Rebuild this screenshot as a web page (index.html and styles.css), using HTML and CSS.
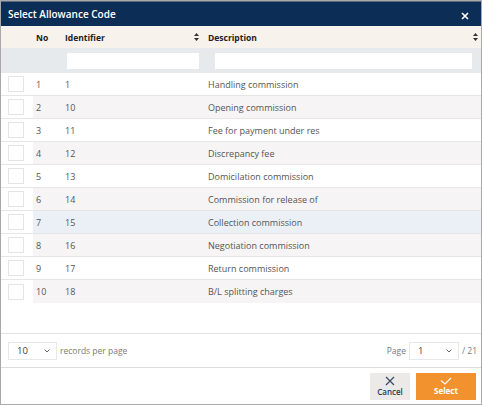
FILE: index.html
```html
<!DOCTYPE html>
<html>
<head>
<meta charset="utf-8">
<link rel="stylesheet" href="styles.css">
</head>
<body>
<div class="dialog">
  <div class="titlebar">
    <span class="title">Select Allowance Code</span>
    <svg class="close" width="8" height="8" viewBox="0 0 8 8"><path d="M1 1L7 7M7 1L1 7" stroke="#fff" stroke-width="1.6"/></svg>
  </div>
  <div class="grid head">
    <div class="c-chk"></div>
    <div class="c-no">No</div>
    <div class="c-id">Identifier<svg class="sort" width="5" height="8" viewBox="0 0 5 8"><path d="M2.5 0L5 3H0Z M2.5 8L5 5H0Z" fill="#333"/></svg></div>
    <div class="c-desc">Description<svg class="sort" width="5" height="8" viewBox="0 0 5 8"><path d="M2.5 0L5 3H0Z M2.5 8L5 5H0Z" fill="#333"/></svg></div>
  </div>
  <div class="grid filter">
    <div class="c-chk"></div>
    <div class="c-no"></div>
    <div class="c-id"><div class="input"></div></div>
    <div class="c-desc"><div class="input"></div></div>
  </div>
  <div class="rows">
    <div class="grid row"><div class="c-chk"><span class="box"></span></div><div class="c-no">1</div><div class="c-id">1</div><div class="c-desc">Handling commission</div></div>
    <div class="grid row alt"><div class="c-chk"><span class="box"></span></div><div class="c-no">2</div><div class="c-id">10</div><div class="c-desc">Opening commission</div></div>
    <div class="grid row"><div class="c-chk"><span class="box"></span></div><div class="c-no">3</div><div class="c-id">11</div><div class="c-desc">Fee for payment under res</div></div>
    <div class="grid row alt"><div class="c-chk"><span class="box"></span></div><div class="c-no">4</div><div class="c-id">12</div><div class="c-desc">Discrepancy fee</div></div>
    <div class="grid row"><div class="c-chk"><span class="box"></span></div><div class="c-no">5</div><div class="c-id">13</div><div class="c-desc">Domicilation commission</div></div>
    <div class="grid row alt"><div class="c-chk"><span class="box"></span></div><div class="c-no">6</div><div class="c-id">14</div><div class="c-desc">Commission for release of</div></div>
    <div class="grid row hover"><div class="c-chk"><span class="box"></span></div><div class="c-no">7</div><div class="c-id">15</div><div class="c-desc">Collection commission</div></div>
    <div class="grid row alt"><div class="c-chk"><span class="box"></span></div><div class="c-no">8</div><div class="c-id">16</div><div class="c-desc">Negotiation commission</div></div>
    <div class="grid row"><div class="c-chk"><span class="box"></span></div><div class="c-no">9</div><div class="c-id">17</div><div class="c-desc">Return commission</div></div>
    <div class="grid row alt last"><div class="c-chk"><span class="box"></span></div><div class="c-no">10</div><div class="c-id">18</div><div class="c-desc">B/L splitting charges</div></div>
  </div>
  <div class="pager">
    <div class="pager-left">
      <div class="select sel-size"><span>10</span><svg width="6" height="4" viewBox="0 0 6 4"><path d="M0.5 0.5L3 3L5.5 0.5" stroke="#666" fill="none" stroke-width="1"/></svg></div>
      <span class="muted">records per page</span>
    </div>
    <div class="pager-right">
      <span class="muted">Page</span>
      <div class="select sel-page"><span>1</span><svg width="6" height="4" viewBox="0 0 6 4"><path d="M0.5 0.5L3 3L5.5 0.5" stroke="#666" fill="none" stroke-width="1"/></svg></div>
      <span class="muted">/ 21</span>
    </div>
  </div>
  <div class="actions">
    <button class="btn cancel">
      <svg width="10" height="10" viewBox="0 0 10 10"><path d="M1 1L9 9M9 1L1 9" stroke="#3a4a66" stroke-width="1.2"/></svg>
      <span>Cancel</span>
    </button>
    <button class="btn ok">
      <svg width="12" height="8" viewBox="0 0 12 8"><path d="M1 3.5L5 7L11 1" stroke="#fff" fill="none" stroke-width="1.1"/></svg>
      <span>Select</span>
    </button>
  </div>
</div>
</body>
</html>
```
FILE: styles.css
```css
* { box-sizing: border-box; }
html, body { margin: 0; padding: 0; background: #fff; }
body { font-family: "Open Sans", "Noto Sans", sans-serif; }
.dialog {
  width: 482px; height: 405px;
  border: 1px solid #a9a9a9;
  display: flex; flex-direction: column;
  background: #fff;
}
.titlebar {
  height: 25px; background: #0c2e56;
  display: flex; align-items: center; justify-content: space-between;
  padding: 0 12px 0 7px;
  border-top: 1px solid #5a6b80;
}
.title { color: #fff; font-size: 10px; font-weight: 600; }
.close { margin-top: 3px; }
.grid {
  display: grid;
  grid-template-columns: 32px 28px 143px 1fr;
}
.head { height: 22px; background: #f8f2ec; font-size: 8.5px; font-weight: 700; color: #222; }
.head > div { display: flex; align-items: center; }
.head .c-no { padding-left: 3px; }
.head .c-id { padding-left: 4px; padding-right: 5px; justify-content: space-between; }
.head .c-desc { padding-left: 4px; padding-right: 3px; justify-content: space-between; }
.filter { height: 25px; background: #e7eaed; }
.filter .c-id { padding: 5px 5px 4px 6px; }
.filter .c-desc { padding: 5px 9px 4px 11px; }
.input { height: 16px; background: #fff; }
.rows { height: 260px; }
.row { height: 23px; font-size: 9px; color: #555; border-bottom: 1px solid #e6e6e6; }
.row.last { border-bottom: none; }
.row > div { display: flex; align-items: center; }
.row .c-chk { background: #fff; padding-left: 7px; }
.row .c-no { padding-left: 3px; }
.row .c-id { padding-left: 4px; }
.row .c-desc { padding-left: 4px; }
.row.alt > div:not(.c-chk) { background: #f6f4f4; }
.row.hover > div:not(.c-chk) { background: #eaf0f6; }
.box { width: 16px; height: 16px; border: 1px solid #e4e4e4; background: #fff; }
.pager {
  height: 35px; border-top: 1px solid #e2e2e2; border-bottom: 1px solid #dcdcdc;
  display: flex; align-items: center; justify-content: space-between;
  padding: 0 4px 0 7px; font-size: 8.5px;
}
.pager-left, .pager-right { display: flex; align-items: center; gap: 3px; }
.muted { color: #7a7a7a; }
.select {
  height: 18px; border: 1px solid #e8e8e8; background: #fff;
  display: flex; align-items: center; justify-content: space-between;
  padding: 0 6px 0 8px; color: #444; font-size: 9.5px;
}
.sel-size { width: 49px; }
.sel-page { width: 50px; }
.actions {
  flex: 1; display: flex; justify-content: flex-end; align-items: center;
  gap: 6px; padding: 0 5px 0 0;
}
.btn {
  height: 27px; border: none; padding: 0;
  display: flex; flex-direction: column; align-items: center; justify-content: center;
  font-family: "Open Sans", sans-serif; font-size: 8px; line-height: 10px;
}
.btn span { margin-top: 1px; }
.cancel { width: 40px; background: #ece9e9; color: #2b3a55; font-weight: 600; }
.ok { width: 60px; background: #f2922f; color: #fff; font-weight: 700; }
```
